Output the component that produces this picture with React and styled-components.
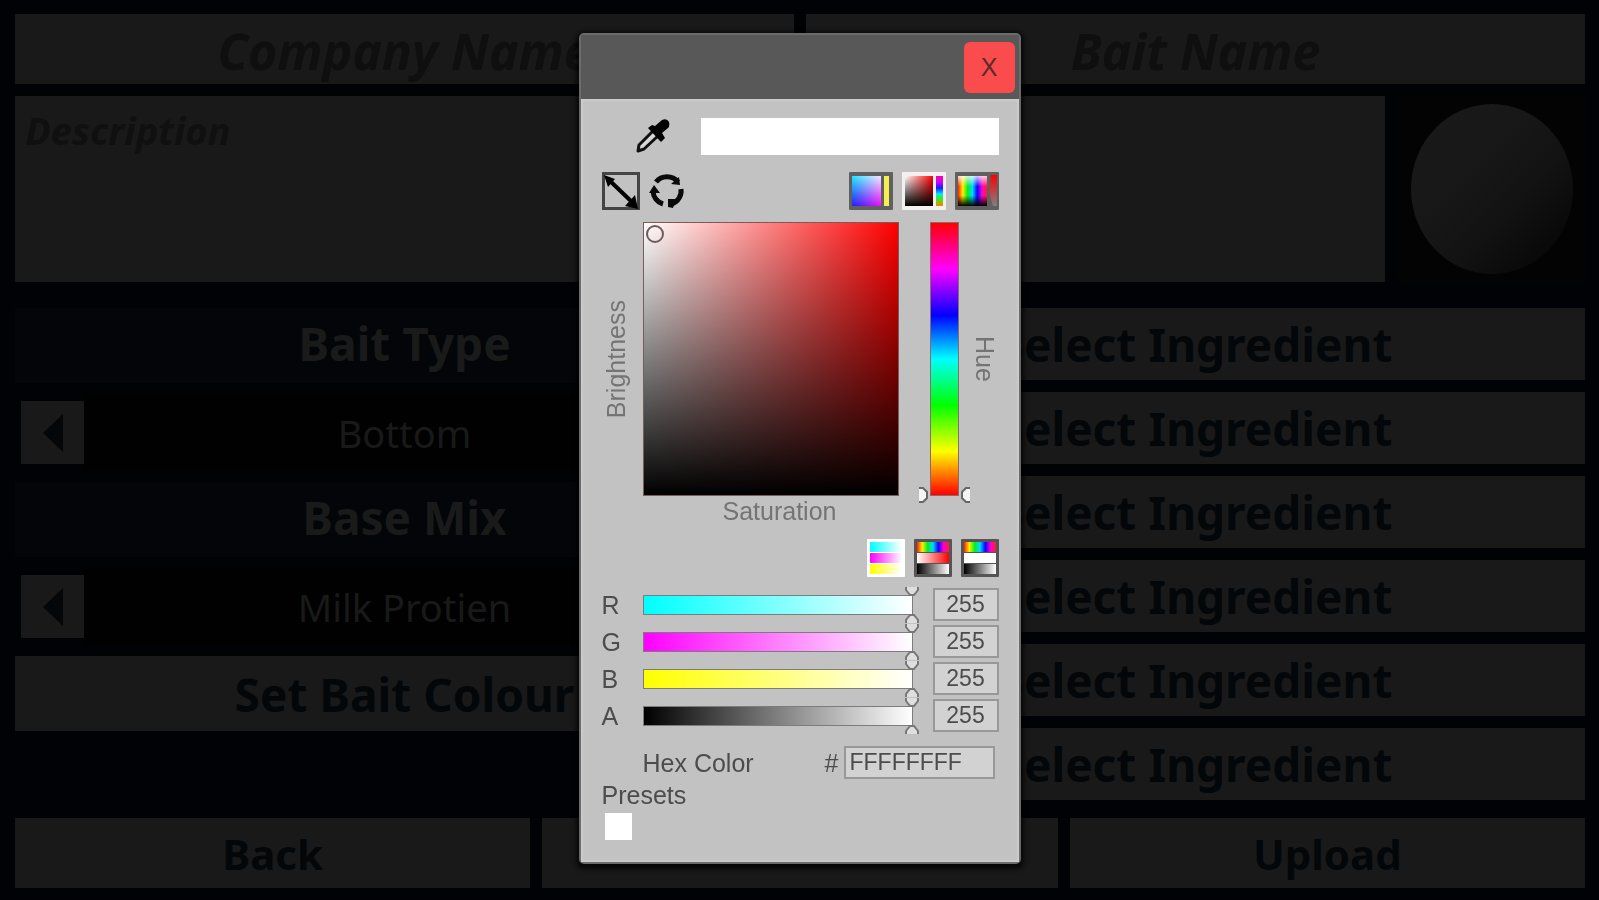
import React, { useState } from 'react';
import styled, { createGlobalStyle } from 'styled-components';

const GlobalStyle = createGlobalStyle`
  * {
    box-sizing: border-box;
  }

  body {
    margin: 0;
    background: #010206;
  }

  button,
  input,
  textarea {
    font-family: inherit;
    border: none;
    outline: none;
    margin: 0;
  }
`;

// Bait editor behind the picker
const PageWrapper = styled.main`
  min-height: 100vh;
  padding: 14px 14px 12px 15px;
  display: flex;
  flex-direction: column;
  background: #010206;
  font-family: 'Noto Sans', 'Open Sans', sans-serif;
`;

const Columns = styled.div`
  display: grid;
  grid-template-columns: repeat(${(props) => props.$count}, 1fr);
  column-gap: 12px;
`;

const NameInput = styled.input`
  width: 100%;
  height: 70px;
  padding: 4px 0 0;
  background: #191919;
  text-align: center;
  font-size: 50px;
  font-weight: 700;
  font-style: italic;

  &::placeholder {
    color: #0f0f0f;
    opacity: 1;
  }
`;

const DescriptionRow = styled.div`
  display: flex;
  gap: 12px;
  margin: 12px 0 26px;
`;

const DescriptionInput = styled.textarea`
  flex: 1;
  height: 186px;
  padding: 12px 10px;
  resize: none;
  background: #191919;
  font-size: 38px;
  line-height: 44px;
  font-weight: 700;
  font-style: italic;

  &::placeholder {
    color: #101010;
    opacity: 1;
  }
`;

const Preview = styled.div`
  width: 188px;
  padding-left: 2px;
  display: flex;
  justify-content: center;
  align-items: center;
  background: #030303;
`;

const BaitBall = styled.div`
  width: 162px;
  height: 170px;
  border-radius: 50%;
  background: linear-gradient(135deg, #191919 0%, #181818 35%, #121212 62%, #070707 90%);
`;

const Stack = styled.div`
  display: flex;
  flex-direction: column;
  gap: 12px;
`;

const SectionTitle = styled.h2`
  height: 75px;
  margin: 0;
  padding-bottom: 6px;
  display: flex;
  justify-content: center;
  align-items: center;
  background: #040509;
  color: #1a1a1a;
  font-size: 46px;
  font-weight: 700;
`;

const Selector = styled.div`
  height: 75px;
  padding: 0 6px;
  display: flex;
  align-items: center;
`;

const SelectorValue = styled.span`
  flex: 1;
  height: 75px;
  display: flex;
  justify-content: center;
  align-items: center;
  background: #010101;
  color: #191919;
  font-size: 38px;
`;

const ArrowButton = styled.button`
  width: 63px;
  height: 63px;
  padding: 0;
  display: flex;
  justify-content: center;
  align-items: center;
  background: #191919;
`;

const MenuButton = styled.button`
  height: ${(props) => props.$height}px;
  padding: 0;
  background: #191919;
  color: #04070a;
  font-size: ${(props) => props.$size}px;
  font-weight: 700;
`;

const Footer = styled(Columns)`
  margin-top: 18px;
`;

// Colour picker window
const Overlay = styled.div`
  position: fixed;
  inset: 0;
  padding-bottom: 3px;
  display: flex;
  justify-content: center;
  align-items: center;
`;

const Dialog = styled.section`
  width: 442px;
  border-radius: 5px;
  border: 2px solid #6b6b6b;
  background: #c2c2c2;
  box-shadow: 0 2px 5px 3px rgba(0, 0, 0, 0.7);
  color: #4c4c4c;
  font-family: 'Liberation Sans', Arial, sans-serif;
  font-size: 25px;
  line-height: 28px;
`;

const DialogHeader = styled.header`
  height: 64px;
  padding: 0 4px;
  display: flex;
  justify-content: flex-end;
  align-items: center;
  background: #585858;
`;

const CloseButton = styled.button`
  width: 51px;
  height: 51px;
  padding: 0;
  border-radius: 6px;
  background: #fa4c4c;
  color: #5c2a2a;
  font-size: 25px;
`;

const DialogBody = styled.div`
  padding: 19px 20px 22px 21px;
  box-shadow: inset 0 0 3px 1px #d4d4d4;
`;

const SampleRow = styled.div`
  display: flex;
  justify-content: space-between;
  align-items: center;
  padding-left: 32px;
`;

const Sample = styled.div`
  width: 298px;
  height: 37px;
  background: #ffffff;
`;

const IconButton = styled.button`
  display: flex;
  padding: 0;
  background: none;
`;

const ToolRow = styled.div`
  display: flex;
  align-items: center;
  gap: 9px;
  margin-top: ${(props) => props.$top}px;
`;

const Spacer = styled.span`
  flex: 1;
`;

const PickRow = styled.div`
  display: grid;
  grid-template-columns: 41px 256px 31px 29px 1fr;
  align-items: center;
  margin-top: 12px;
`;

const AxisLabel = styled.span`
  color: #747474;
  writing-mode: vertical-rl;
  justify-self: ${(props) => (props.$flip ? 'start' : 'end')};
  transform: ${(props) => (props.$flip ? 'rotate(180deg)' : 'none')};
`;

const Field = styled.div`
  position: relative;
  height: 274px;
  border: 1px solid #7d5a5a;
  background:
    linear-gradient(to bottom, transparent, #000000),
    linear-gradient(to right, #ffffff, #ff0000);
`;

const FieldMarker = styled.span`
  position: absolute;
  left: 2px;
  top: 2px;
  width: 18px;
  height: 18px;
  border: 2px solid #6f5c5c;
  border-radius: 50%;
`;

const HueTrack = styled.div`
  position: relative;
  grid-column: 4;
  height: 274px;
`;

const HueSlider = styled.input`
  appearance: none;
  display: block;
  width: 29px;
  height: 274px;
  writing-mode: vertical-lr;
  direction: rtl;
  border: 1px solid #8a6b6b;
  background: linear-gradient(
    to bottom,
    #ff0000,
    #ff00ff 17%,
    #0000ff 34%,
    #00ffff 50%,
    #00ff00 67%,
    #ffff00 84%,
    #ff0000
  );

  &::-webkit-slider-thumb {
    appearance: none;
    width: 29px;
    height: 1px;
  }
`;

const HueMarks = styled.svg`
  position: absolute;
  left: -13px;
  bottom: -7px;
  pointer-events: none;
`;

const FieldCaption = styled.div`
  width: 256px;
  margin: 1px 0 0 41px;
  padding-left: 18px;
  text-align: center;
  color: #747474;
`;

const ChannelList = styled.div`
  display: flex;
  flex-direction: column;
  gap: 5px;
  margin-top: 11px;
`;

const ChannelRow = styled.div`
  display: grid;
  grid-template-columns: 41px 1fr 66px;
  align-items: center;
  height: 32px;
`;

const ChannelTrack = styled.div`
  position: relative;
  width: 270px;
`;

const ChannelSlider = styled.input`
  appearance: none;
  display: block;
  width: 270px;
  height: 20px;
  border: 1px solid #7c7c7c;
  background: linear-gradient(to right, ${(props) => props.$color}, #ffffff);

  &::-webkit-slider-thumb {
    appearance: none;
    width: 2px;
    height: 18px;
  }
`;

const ChannelMarks = styled.svg`
  position: absolute;
  top: -9px;
  pointer-events: none;
`;

const ValueInput = styled.input`
  width: ${(props) => props.$width}px;
  height: 33px;
  padding: 0 4px;
  border: 2px solid #989898;
  background: #d2d2d2;
  color: #4c4c4c;
  font-size: 23px;
  text-align: ${(props) => props.$align};
`;

const HexRow = styled.div`
  display: flex;
  align-items: center;
  gap: 5px;
  margin: 15px 4px 0 0;
  padding-left: 41px;
`;

const HexLabel = styled.label`
  flex: 1;
`;

const Presets = styled.div`
  display: flex;
  flex-direction: column;
  align-items: flex-start;
  gap: 4px;
  margin-top: 2px;
`;

const PresetSwatch = styled.button`
  width: 27px;
  height: 27px;
  margin-left: 3px;
  padding: 0;
  background: #ffffff;
`;

const Arrow = ({ flip }) => (
  <svg width="20" height="38" viewBox="0 0 20 38">
    <path d={flip ? 'M0 0 L20 19 L0 38 Z' : 'M20 0 L0 19 L20 38 Z'} fill="#04070a" />
  </svg>
);

const Eyedropper = () => (
  <svg width="36" height="36" viewBox="0 0 36 36">
    <path d="M20 11 L5 26 L4 32 L10 30 L25 16" fill="#d8d8d8" stroke="#111" strokeWidth="3" strokeLinejoin="round" />
    <path d="M14 9 L18 6 L21 7 L28 1 Q33 -1 35 3 Q36 7 34 9 L28 14 L31 19 L27 23 Z" fill="#000" />
  </svg>
);

const LineBoxIcon = () => (
  <svg width="38" height="38" viewBox="0 0 38 38">
    <rect x="1" y="1" width="36" height="36" fill="none" stroke="#444" strokeWidth="4" />
    <path d="M6 7 L32 32" stroke="#000" strokeWidth="4" />
    <path d="M2 3 L13 7 L6 15 Z M36 37 L23 34 L33 23 Z" fill="#000" />
  </svg>
);

const CycleIcon = () => (
  <svg width="36" height="36" viewBox="0 0 36 36" fill="none" stroke="#0a0a0a" strokeWidth="5">
    <path d="M7 9 A14 14 0 0 1 29 9" />
    <path d="M32 16 A14 14 0 0 1 23 31" />
    <path d="M14 31 A14 14 0 0 1 4 18" />
    <path d="M30 4 L31 12 L22 11 Z M19 26 L27 26 L24 35 L19 34 Z M0 20 L5 12 L11 20 Z" fill="#0a0a0a" stroke="none" />
  </svg>
);

const rainbow = ['#ff2000', '#ffee00', '#00f020', '#00d8ff', '#1000ff', '#ff00d0', '#ff2030'];

const Gradients = () => (
  <svg width="0" height="0" style={{ display: 'block' }}>
    <defs>
      <linearGradient id="rainbow">
        {rainbow.map((color, i) => (
          <stop key={i} offset={i / 6} stopColor={color} />
        ))}
      </linearGradient>
      <linearGradient id="rainbowDown" x1="0" y1="0" x2="0" y2="1">
        <stop offset="0" stopColor="#ff00a0" />
        <stop offset="0.2" stopColor="#d000ff" />
        <stop offset="0.4" stopColor="#1020ff" />
        <stop offset="0.6" stopColor="#00e8ff" />
        <stop offset="0.75" stopColor="#30f020" />
        <stop offset="1" stopColor="#ff8000" />
      </linearGradient>
      <linearGradient id="cyanBlue" x1="0" y1="0" x2="0" y2="1">
        <stop offset="0" stopColor="#20e8ff" />
        <stop offset="1" stopColor="#2020ff" />
      </linearGradient>
      <linearGradient id="whitePink" x1="0" y1="0" x2="0" y2="1">
        <stop offset="0" stopColor="#f4e8ff" />
        <stop offset="1" stopColor="#ee10f4" />
      </linearGradient>
      <linearGradient id="fadeRight">
        <stop offset="0" stopColor="#000" />
        <stop offset="1" stopColor="#fff" />
      </linearGradient>
      <mask id="fadeMask" maskContentUnits="objectBoundingBox">
        <rect width="1" height="1" fill="url(#fadeRight)" />
      </mask>
      <linearGradient id="whiteRed">
        <stop offset="0" stopColor="#fff" />
        <stop offset="1" stopColor="#ff0000" />
      </linearGradient>
      <linearGradient id="blackWhite">
        <stop offset="0" stopColor="#000" />
        <stop offset="1" stopColor="#fff" />
      </linearGradient>
      <linearGradient id="cyanWhite">
        <stop offset="0" stopColor="#00ffff" />
        <stop offset="1" stopColor="#fff" />
      </linearGradient>
      <linearGradient id="pinkWhite">
        <stop offset="0" stopColor="#ff00ff" />
        <stop offset="1" stopColor="#fff" />
      </linearGradient>
      <linearGradient id="yellowWhite">
        <stop offset="0" stopColor="#ffff00" />
        <stop offset="1" stopColor="#fff" />
      </linearGradient>
      <linearGradient id="shade" x1="0" y1="0" x2="0" y2="1">
        <stop offset="0" stopColor="#000" stopOpacity="0" />
        <stop offset="1" stopColor="#000" />
      </linearGradient>
      <linearGradient id="tint" x1="0" y1="0" x2="0" y2="1">
        <stop offset="0" stopColor="#fff" stopOpacity="0.8" />
        <stop offset="0.35" stopColor="#fff" stopOpacity="0" />
        <stop offset="0.65" stopColor="#000" stopOpacity="0" />
        <stop offset="1" stopColor="#000" />
      </linearGradient>
      <linearGradient id="redGrey" x1="0" y1="0" x2="0" y2="1">
        <stop offset="0" stopColor="#ff0000" />
        <stop offset="1" stopColor="#808080" />
      </linearGradient>
    </defs>
  </svg>
);

const RgbModeIcon = () => (
  <svg width="44" height="38" viewBox="0 0 44 38">
    <rect width="44" height="38" rx="1" fill="#606060" />
    <rect x="3" y="4" width="29" height="30" fill="url(#cyanBlue)" />
    <rect x="3" y="4" width="29" height="30" fill="url(#whitePink)" mask="url(#fadeMask)" />
    <rect x="35" y="4" width="5" height="30" fill="#f4f050" />
  </svg>
);

const HsvModeIcon = () => (
  <svg width="44" height="38" viewBox="0 0 44 38">
    <rect width="44" height="38" rx="1" fill="#f4f0f0" />
    <rect x="3" y="4" width="28" height="30" fill="url(#whiteRed)" />
    <rect x="3" y="4" width="28" height="30" fill="url(#shade)" />
    <rect x="34" y="4" width="7" height="30" fill="url(#rainbowDown)" />
  </svg>
);

const HueModeIcon = () => (
  <svg width="44" height="38" viewBox="0 0 44 38">
    <rect width="44" height="38" rx="1" fill="#606060" />
    <rect x="3" y="4" width="29" height="30" fill="url(#rainbow)" />
    <rect x="3" y="4" width="29" height="30" fill="url(#tint)" />
    <path d="M34 20 L36 3 L42 3 L42 34 L38 34 Z" fill="url(#redGrey)" />
  </svg>
);

const BarsIcon = ({ frame, fills }) => (
  <svg width="38" height="38" viewBox="0 0 38 38">
    <rect width="38" height="38" rx="1" fill={frame} />
    {fills.map((fill, i) => (
      <rect key={fill} x="3" y={3 + i * 11} width="32" height="10" fill={fill} />
    ))}
  </svg>
);

const channels = [
  { name: 'R', color: '#00ffff' },
  { name: 'G', color: '#ff00ff' },
  { name: 'B', color: '#ffff00' },
  { name: 'A', color: '#000000' },
];

const ingredients = [1, 2, 3, 4, 5, 6];

const OptionSelector = ({ value }) => (
  <Selector>
    <ArrowButton aria-label="Previous">
      <Arrow />
    </ArrowButton>
    <SelectorValue>{value}</SelectorValue>
    <ArrowButton aria-label="Next">
      <Arrow flip />
    </ArrowButton>
  </Selector>
);

const ColourPicker = ({ onClose }) => {
  const [values, setValues] = useState({ R: 255, G: 255, B: 255, A: 255 });

  const setChannel = (name, value) => {
    const next = Math.max(0, Math.min(255, Number(value) || 0));
    setValues({ ...values, [name]: next });
  };

  const hex = channels
    .map(({ name }) => values[name].toString(16).padStart(2, '0').toUpperCase())
    .join('');

  return (
    <Overlay>
      <Dialog role="dialog" aria-label="Colour picker">
        <DialogHeader>
          <CloseButton onClick={onClose}>X</CloseButton>
        </DialogHeader>
        <DialogBody>
          <Gradients />
          <SampleRow>
            <IconButton aria-label="Pick from screen">
              <Eyedropper />
            </IconButton>
            <Sample />
          </SampleRow>
          <ToolRow $top={17}>
            <IconButton aria-label="Toggle field">
              <LineBoxIcon />
            </IconButton>
            <IconButton aria-label="Cycle mode">
              <CycleIcon />
            </IconButton>
            <Spacer />
            <IconButton aria-label="RGB field">
              <RgbModeIcon />
            </IconButton>
            <IconButton aria-label="Saturation and brightness field">
              <HsvModeIcon />
            </IconButton>
            <IconButton aria-label="Hue field">
              <HueModeIcon />
            </IconButton>
          </ToolRow>
          <PickRow>
            <AxisLabel $flip>Brightness</AxisLabel>
            <Field>
              <FieldMarker />
            </Field>
            <HueTrack>
              <HueSlider type="range" min="0" max="360" defaultValue="0" aria-label="Hue" />
              <HueMarks width="55" height="16" viewBox="0 0 55 16" fill="#f4f4f4" stroke="#666" strokeWidth="2">
                <path d="M2 1 L6 1 L10 5 L10 11 L6 15 L2 15" />
                <path d="M53 1 L49 1 L45 5 L45 11 L49 15 L53 15" />
              </HueMarks>
            </HueTrack>
            <AxisLabel>Hue</AxisLabel>
          </PickRow>
          <FieldCaption>Saturation</FieldCaption>
          <ToolRow $top={14}>
            <Spacer />
            <IconButton aria-label="RGB sliders">
              <BarsIcon frame="#ffffff" fills={['url(#cyanWhite)', 'url(#pinkWhite)', 'url(#yellowWhite)']} />
            </IconButton>
            <IconButton aria-label="HSV sliders">
              <BarsIcon frame="#555555" fills={['url(#rainbow)', 'url(#whiteRed)', 'url(#blackWhite)']} />
            </IconButton>
            <IconButton aria-label="HSL sliders">
              <BarsIcon frame="#555555" fills={['url(#rainbow)', '#ffffff', 'url(#blackWhite)']} />
            </IconButton>
          </ToolRow>
          <ChannelList>
            {channels.map(({ name, color }) => (
              <ChannelRow key={name}>
                <label htmlFor={`channel-${name}`}>{name}</label>
                <ChannelTrack>
                  <ChannelSlider
                    type="range"
                    min="0"
                    max="255"
                    $color={color}
                    aria-label={`${name} slider`}
                    value={values[name]}
                    onChange={(e) => setChannel(name, e.target.value)}
                  />
                  <ChannelMarks
                    width="16"
                    height="38"
                    viewBox="0 0 16 38"
                    fill="#dedede"
                    stroke="#777"
                    strokeWidth="2"
                    style={{ right: ((255 - values[name]) * 268) / 255 - 7 }}
                  >
                    <path d="M2 1 L2 4 L6 9 L10 9 L14 4 L14 1" />
                    <path d="M2 37 L2 34 L6 29 L10 29 L14 34 L14 37" />
                  </ChannelMarks>
                </ChannelTrack>
                <ValueInput
                  id={`channel-${name}`}
                  $width={66}
                  $align="center"
                  value={values[name]}
                  onChange={(e) => setChannel(name, e.target.value)}
                />
              </ChannelRow>
            ))}
          </ChannelList>
          <HexRow>
            <HexLabel htmlFor="hex">Hex Color</HexLabel>
            <span>#</span>
            <ValueInput id="hex" $width={151} $align="left" value={hex} readOnly />
          </HexRow>
          <Presets>
            <span>Presets</span>
            <PresetSwatch aria-label="White" />
          </Presets>
        </DialogBody>
      </Dialog>
    </Overlay>
  );
};

const App = () => {
  const [pickerOpen, setPickerOpen] = useState(true);

  return (
    <>
      <GlobalStyle />
      <PageWrapper>
        <Columns $count={2}>
          <NameInput placeholder="Company Name" aria-label="Company Name" />
          <NameInput placeholder="Bait Name" aria-label="Bait Name" />
        </Columns>
        <DescriptionRow>
          <DescriptionInput placeholder="Description" aria-label="Description" />
          <Preview>
            <BaitBall />
          </Preview>
        </DescriptionRow>
        <Columns $count={2}>
          <Stack>
            <SectionTitle>Bait Type</SectionTitle>
            <OptionSelector value="Bottom" />
            <SectionTitle>Base Mix</SectionTitle>
            <OptionSelector value="Milk Protien" />
            <MenuButton $height={75} $size={46} onClick={() => setPickerOpen(true)}>
              Set Bait Colour
            </MenuButton>
          </Stack>
          <Stack>
            {ingredients.map((slot) => (
              <MenuButton key={slot} $height={72} $size={46}>
                Select Ingredient
              </MenuButton>
            ))}
          </Stack>
        </Columns>
        <Footer $count={3}>
          <MenuButton $height={70} $size={42}>Back</MenuButton>
          <MenuButton $height={70} $size={42} aria-label="Save" />
          <MenuButton $height={70} $size={42}>Upload</MenuButton>
        </Footer>
      </PageWrapper>
      {pickerOpen && <ColourPicker onClose={() => setPickerOpen(false)} />}
    </>
  );
};

export default App;
